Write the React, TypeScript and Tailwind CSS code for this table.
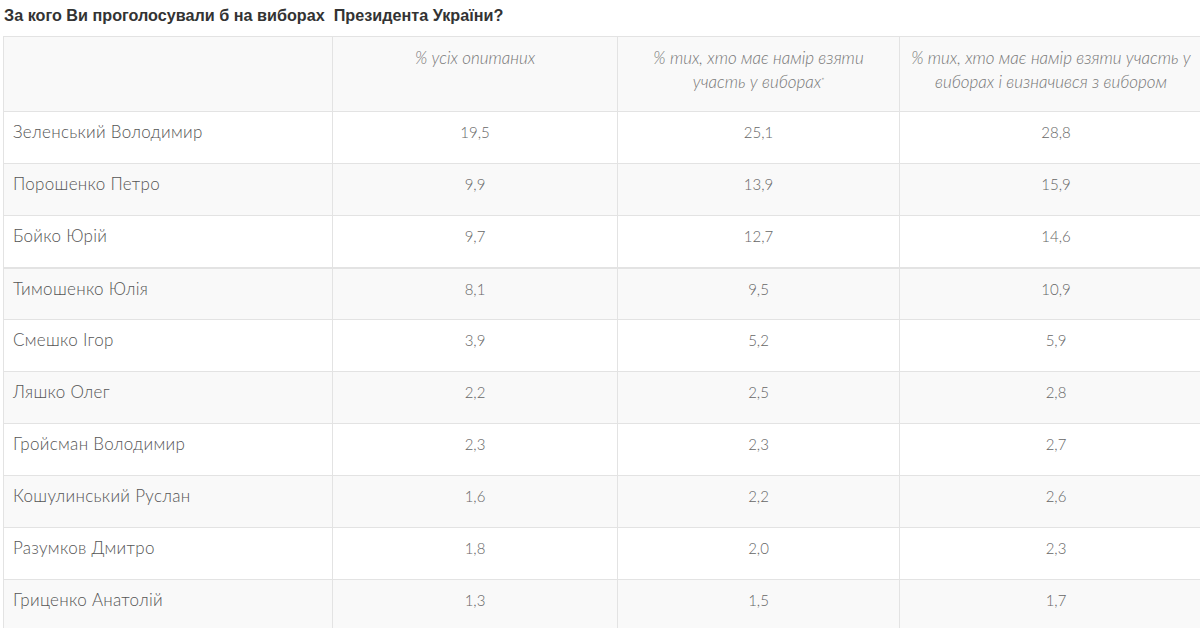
import React from 'react';

const rows: [string, string, string, string][] = [
  ['Зеленський Володимир', '19,5', '25,1', '28,8'],
  ['Порошенко Петро', '9,9', '13,9', '15,9'],
  ['Бойко Юрій', '9,7', '12,7', '14,6'],
  ['Тимошенко Юлія', '8,1', '9,5', '10,9'],
  ['Смешко Ігор', '3,9', '5,2', '5,9'],
  ['Ляшко Олег', '2,2', '2,5', '2,8'],
  ['Гройсман Володимир', '2,3', '2,3', '2,7'],
  ['Кошулинський Руслан', '1,6', '2,2', '2,6'],
  ['Разумков Дмитро', '1,8', '2,0', '2,3'],
  ['Гриценко Анатолій', '1,3', '1,5', '1,7'],
];

const App: React.FC = () => {
  return (
    <div className="w-[1200px] h-[628px] overflow-hidden bg-white">
      <h1 className="pl-[4px] pt-[3px] h-[36px] text-[16.2px] font-bold text-[#333] font-['Liberation_Sans',Arial,sans-serif]">
        За кого Ви проголосували б на виборах&nbsp; Президента України?
      </h1>
      <table className="ml-[3px] w-[1210px] table-fixed border-collapse font-['Lato',sans-serif] font-light text-[17px] tracking-[0.3px]">
        <colgroup>
          <col className="w-[329px]" />
          <col className="w-[285px]" />
          <col className="w-[282px]" />
          <col />
        </colgroup>
        <thead>
          <tr className="h-[75px] bg-[#f9f9f9]">
            <th className="border border-[#e3e3e3]" />
            <th className="border border-[#e3e3e3] align-top pt-[9px] px-[8px] italic font-light text-[#777] leading-[24px] text-center tracking-normal">
              % усіх опитаних
            </th>
            <th className="border border-[#e3e3e3] align-top pt-[9px] px-[8px] italic font-light text-[#777] leading-[24px] text-center tracking-normal">
              <span className="inline-block w-[222px]">
                % тих, хто має намір взяти участь у виборах
                <sup className="text-[8px] leading-none">*</sup>
              </span>
            </th>
            <th className="border border-[#e3e3e3] align-top pt-[9px] px-[8px] italic font-light text-[#777] leading-[24px] text-left tracking-normal">
              <span className="inline-block w-[284px] ml-[1px] text-center">
                % тих, хто має намір взяти участь у виборах і визначився з вибором
              </span>
            </th>
          </tr>
        </thead>
        <tbody>
          {rows.map((r, i) => (
            <tr
              key={i}
              className={`h-[52px] ${i % 2 === 1 ? 'bg-[#f9f9f9]' : 'bg-white'} ${i === 3 ? 'border-t-2 border-t-[#e3e3e3]' : ''}`}
            >
              <td className="border border-[#e3e3e3] align-top pt-[10px] pl-[9px] text-[#555] leading-[20px]">{r[0]}</td>
              {r.slice(1).map((v, j) => (
                <td
                  key={j}
                  className="border border-[#e3e3e3] align-top pt-[10px] text-center text-[#666] leading-[20px] text-[15px] tracking-normal"
                >
                  {v}
                </td>
              ))}
            </tr>
          ))}
        </tbody>
      </table>
    </div>
  );
};

export default App;
